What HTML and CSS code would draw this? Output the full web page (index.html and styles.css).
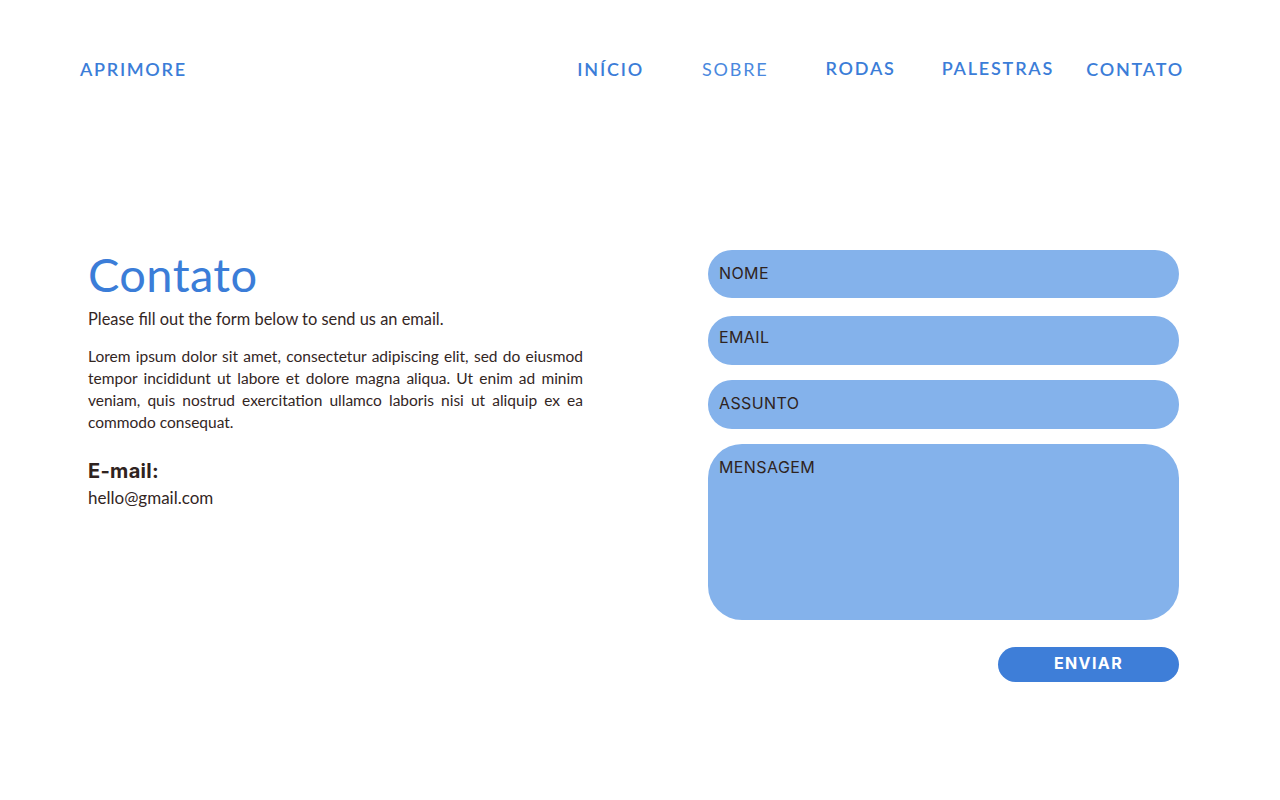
FILE: index.html
```html
<!DOCTYPE html>
<html lang="pt">
<head>
<meta charset="utf-8">
<title>Aprimore - Contato</title>
<link rel="stylesheet" href="styles.css">
</head>
<body>
<header class="topbar">
  <a class="brand" href="#">APRIMORE</a>
  <nav class="nav">
    <a class="nav-link nav-inicio" href="#">INÍCIO</a>
    <a class="nav-link nav-sobre" href="#">SOBRE</a>
    <a class="nav-link nav-rodas" href="#">RODAS</a>
    <a class="nav-link nav-palestras" href="#">PALESTRAS</a>
    <a class="nav-link nav-contato" href="#">CONTATO</a>
  </nav>
</header>
<main class="contact">
  <section class="info">
    <h1 class="title">Contato</h1>
    <p class="lead">Please fill out the form below to send us an email.</p>
    <p class="body-text">Lorem ipsum dolor sit amet, consectetur adipiscing elit, sed do eiusmod tempor incididunt ut labore et dolore magna aliqua. Ut enim ad minim veniam, quis nostrud exercitation ullamco laboris nisi ut aliquip ex ea commodo consequat.</p>
    <h2 class="email-label">E-mail:</h2>
    <p class="email">hello@gmail.com</p>
  </section>
  <form class="form">
    <input class="field field-nome" type="text" placeholder="NOME">
    <input class="field field-email" type="email" placeholder="EMAIL">
    <input class="field field-assunto" type="text" placeholder="ASSUNTO">
    <textarea class="field field-msg" placeholder="MENSAGEM"></textarea>
    <div class="actions">
      <button class="send" type="button">ENVIAR</button>
    </div>
  </form>
</main>
</body>
</html>
```

FILE: styles.css
```css
* { box-sizing: border-box; }
html, body { margin: 0; padding: 0; background: #ffffff; }
body {
  font-family: "Lato", "Liberation Sans", sans-serif;
  color: #33261f;
  width: 1280px;
  height: 800px;
  overflow: hidden;
}
a { text-decoration: none; }

.topbar {
  height: 138px;
  padding: 0 96px 0 80px;
  display: flex;
  align-items: center;
  justify-content: space-between;
}
.brand {
  font-family: "Lato", sans-serif;
  font-weight: 600;
  font-size: 18px;
  letter-spacing: 1.7px;
  color: #3b7dd8;
}
.nav { display: flex; align-items: center; }
.nav-link {
  font-family: "Lato", sans-serif;
  font-weight: 600;
  font-size: 18px;
  letter-spacing: 1.8px;
  color: #3b7dd8;
}
.nav-sobre { font-weight: 400; margin-left: 58px; color: #4a88de; }
.nav-rodas { margin-left: 57px; margin-top: -2px; }
.nav-palestras { margin-left: 46px; margin-top: -2px; }
.nav-contato { margin-left: 32px; }

.contact {
  display: flex;
  padding: 112px 0 0 88px;
  gap: 125px;
}
.info { width: 495px; display: flex; flex-direction: column; }
.title {
  margin: 0;
  font-family: "Lato", sans-serif;
  font-weight: 400;
  font-size: 47px;
  line-height: 48px;
  color: #3b7dd8;
  letter-spacing: 0.4px;
}
.lead {
  margin: 10px 0 0;
  font-size: 16.4px;
  line-height: 22px;
}
.body-text {
  margin: 15px 0 0;
  font-size: 15.5px;
  line-height: 22px;
  text-align: justify;
}
.email-label {
  margin: 25px 0 0;
  font-family: "Inter", sans-serif;
  font-weight: 700;
  font-size: 20px;
  line-height: 26px;
  letter-spacing: 0.3px;
  color: #2f2320;
}
.email {
  margin: 3px 0 0;
  font-size: 17px;
  line-height: 22px;
}

.form {
  width: 471px;
  display: flex;
  flex-direction: column;
}
.field {
  display: block;
  width: 100%;
  border: none;
  outline: none;
  background: #84b2eb;
  font-family: "Inter", sans-serif;
  font-size: 16px;
  letter-spacing: 0.4px;
  color: #2f2320;
  padding: 0 11px 2px;
  border-radius: 24px;
}
.field::placeholder { color: #2f2320; opacity: 1; }
.field-nome { height: 48px; }
.field-email { height: 49px; margin-top: 18px; padding-bottom: 8px; }
.field-assunto { height: 49px; margin-top: 15px; padding-bottom: 3px; }
.field-msg {
  height: 176px;
  margin-top: 15px;
  border-radius: 34px;
  padding: 13px 11px;
  resize: none;
  line-height: 20px;
}
.actions { display: flex; justify-content: flex-end; margin-top: 27px; }
.send {
  width: 181px;
  height: 35px;
  border: none;
  border-radius: 18px;
  background: #3e7ed8;
  color: #ffffff;
  font-family: "Inter", sans-serif;
  font-weight: 700;
  font-size: 16px;
  letter-spacing: 1.4px;
  padding: 0 0 3px;
}
```
